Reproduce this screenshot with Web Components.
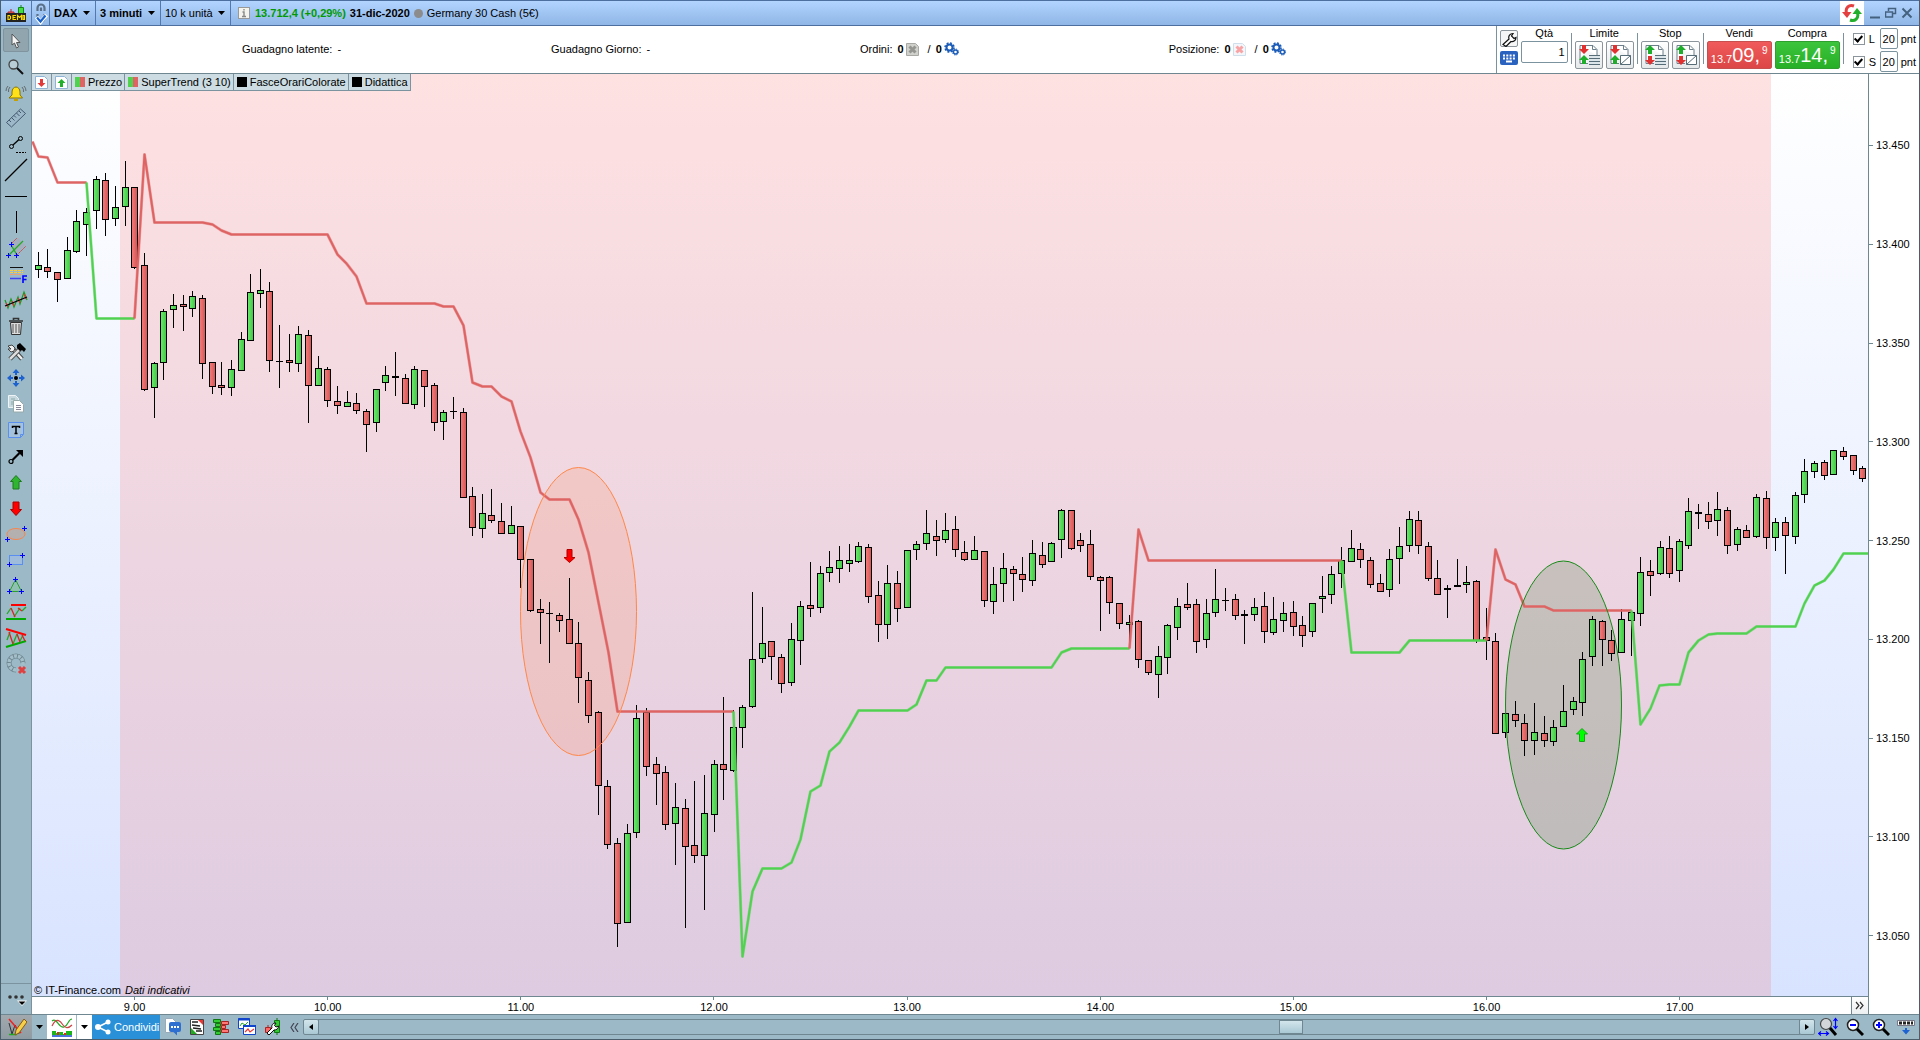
<!DOCTYPE html>
<html lang="it">
<head>
<meta charset="utf-8">
<title>DAX 3 minuti</title>
<style>
  html, body { margin: 0; height: 100%; }
  body { font: 11px/14px "Liberation Sans", Arial, sans-serif; color: #000; overflow: hidden; }
</style>
</head>
<body>
<app-window></app-window>
<script>
const PLUS = (x, y) => `<path d="M${x - 2} ${y + .5}h5M${x + .5} ${y - 2}v5" stroke="#00f"/>`;
const PAGE = 'M.5.5h9l3 3v9h-12z';
const LENS = `<circle cx="9" cy="8" r="5.5" fill="#fff" stroke="#222" stroke-width="1.5"/><path d="M13 12l6 6" stroke="#000" stroke-width="3"/>`;
const UPDN = (up, dn) => `<path d="M${up}l5 5h-3v4h-4v-4h-3z" fill="#1fae2c"/><path d="M${dn}l5-5h-3v-4h-4v4h-3z" fill="#e03030"/>`;

/* name: [width, height, markup] */
const ICONS = {
  demo: [22, 20, `<path d="M3 9h6v4H3zM6 6v3" fill="#e66" stroke="#b22"/><path d="M13.500 4.500h5v6h-5zM16 2v2" fill="#4d4" stroke="#181"/><rect x="1" y="10" width="20" height="9" fill="#222"/><path d="M3 12.500v4h1.500l1-1v-2l-1-1zM11 12.500H8v4h3M8 14.500h2.500M12.500 17v-4.500l2 2 2-2V17M18 12.500h1.500v4H18z" fill="none" stroke="#fd0" stroke-width="1.200"/>`],
  link: [14, 24, `<path d="M3.500 10V7a3.500 3.500 0 0 1 7 0v3M7 10V6.500" fill="none" stroke="#5a7088" stroke-width="2.200"/><path d="M3.500 13v4a3.500 3.500 0 0 0 7 0v-4" fill="none" stroke="#5a7088" stroke-width="2.200"/><path d="M2.500 16l4 5 6-7" fill="none" stroke="#fff" stroke-width="4"/><path d="M3 16.500l3.500 4 5-6" fill="none" stroke="#1b62c8" stroke-width="2.200"/>`],
  caret: [7, 4, `<path d="M0 0h7L3.500 4z" fill="#000"/>`],
  info: [12, 12, `<rect x=".5" y=".5" width="11" height="11" fill="#f4f4ec" stroke="#999"/><path d="M6 2v1.500M4.500 5H6v4M4 9.500h4" stroke="#888" stroke-width="1.400" fill="none"/>`],
  refresh: [20, 20, `<path d="M12 3C7 1 3 5 4.500 10" fill="none" stroke="#e44040" stroke-width="3"/><path d="M0 9h9.500L5 15z" fill="#e44040"/><path d="M8 17c5 2 9-2 7.500-7" fill="none" stroke="#22b02c" stroke-width="3"/><path d="M20 11h-9.500L15 5z" fill="#22b02c"/>`],
  min: [12, 12, `<path d="M1 10.500h10" stroke="#44627f" stroke-width="2"/>`],
  restore: [12, 12, `<path d="M3.500 4V1.500h7v5H8M.5 5h7v5h-7z" fill="none" stroke="#44627f" stroke-width="1.500"/>`],
  close: [12, 12, `<path d="M1.500 1.500l9 9M10.500 1.500l-9 9" stroke="#44627f" stroke-width="2"/>`],

  cursor: [24, 24, `<path d="M8 6v11l2.500-2 2 5 2-1-2-4.500H16z" fill="#f4f4f4" stroke="#555"/>`],
  search: [24, 24, `<circle cx="9.500" cy="10.500" r="4.500" fill="#b9cdd6" stroke="#444" stroke-width="1.300"/><path d="M13 14l6 6" stroke="#111" stroke-width="2"/>`],
  bell: [24, 24, `<path d="M5 18h13.500l-2.500-3v-3c0-3-2-5-4-5s-4 2-4 5v3z" fill="#ffe21a" stroke="#8a7400"/><path d="M10 20h4" stroke="#c5a000" stroke-width="2"/><path d="M6 7q-2 2-1.500 5M4 6q-2 2-2 5M18 7q2 2 1.500 5M20 6q2 2 2 5" fill="none" stroke="#555" stroke-width=".8"/>`],
  ruler: [24, 24, `<path d="M2.500 16.500l14-13.500 5 4.500-14 13.500z" fill="#9db8c9" stroke="#43596e"/><path d="M5 14l2 2M7.500 11.500l3 3M10 9.500l2 2M12.500 7l3 3M15 5l2 2" stroke="#43596e"/>`],
  segment: [24, 24, `<circle cx="7.500" cy="14.500" r="2" fill="none" stroke="#000"/><circle cx="16.500" cy="6.500" r="2" fill="none" stroke="#000"/><path d="M9 13l6-5.500" stroke="#000" stroke-width="1.300"/><path d="M12 20.500h10" stroke="#000" stroke-dasharray="2 1"/>`],
  line: [24, 24, `<path d="M1 23L23 1" stroke="#000" stroke-width="1.300"/>`],
  hline: [24, 24, `<path d="M1 12.500h22" stroke="#000"/>`],
  vline: [24, 24, `<path d="M12.500 1v22" stroke="#000"/>`],
  fork: [24, 24, `<path d="M7 9l5 9 9-9-7-7z" fill="#a9a9bb" opacity=".7"/><path d="M6 9l7-7M13 19l9-9" stroke="#d33" stroke-dasharray="2 1"/><path d="M5 19L19 5M7 9l6 10" stroke="#2a2" stroke-width="1.300"/>${PLUS(7, 8)}${PLUS(4, 19)}${PLUS(12, 19)}`],
  fibo: [24, 24, `<path d="M6 5.500h13" stroke="#111"/><path d="M6 8.500h13M6 10.500h13" stroke="#fc3" stroke-dasharray="3 1"/><path d="M6 12.500h12" stroke="#f96" stroke-dasharray="3 1"/><path d="M6 16.500h11" stroke="#44e" stroke-width="1.500"/><path d="M19 21v-7h4M19 17.500h3.500" stroke="#00f" stroke-width="1.600" fill="none"/>`],
  regress: [24, 24, `<path d="M1 12l3 8 3-9 3 8 4-10 2 7 4-12 3 8" fill="none" stroke="#1a9a1a" stroke-width="1.200"/><path d="M2 15l2 4M8 13l2 5M14 10l2 5M20 6l2 5" stroke="#e33" stroke-width="1.200"/><path d="M1 18l22-9" stroke="#000" stroke-width="1.200"/>`],
  trash: [24, 24, `<path d="M6.500 8.500h11l-1 12h-9z" fill="#ddd" stroke="#333"/><path d="M9 10v9M12 10v9M15 10v9" stroke="#555"/><path d="M5 7h14M9.500 6V4.500h5V6" stroke="#333" stroke-width="1.600" fill="none"/>`],
  tools: [24, 24, `<path d="M8 8l10 11" stroke="#444" stroke-width="4.500"/><path d="M8 8l10 11" stroke="#eee" stroke-width="2.500"/><path d="M4 6l4-1 3 3-1 3-3 1-3-3 3 0z" fill="#eee" stroke="#444"/><path d="M6 19L16 9" stroke="#444" stroke-width="4.500"/><path d="M6 19L16 9" stroke="#ddd" stroke-width="2.500"/><path d="M13 5l3-2 6 6-2 3-2-2-2 1-3-3z" fill="#000"/>`],
  move: [24, 24, `<g fill="#1d62d0"><path d="M12 3l3.500 4H8.500zM12 21l3.500-4H8.500zM3 12l4-3.500v7zM21 12l-4-3.500v7z"/><path d="M11 6h2v3h-2zM11 15h2v3h-2zM6 11h3v2H6zM15 11h3v2h-3z"/></g><circle cx="12" cy="12" r="2" fill="#000"/>`],
  copy: [24, 24, `<path d="M4.500 3.500h7l3 3v9h-10z" fill="#c7d7de" stroke="#eef4f6"/><path d="M7 7h4M7 10h2M7 12h2" stroke="#8aa"/><path d="M9.500 8.500h6l4 4v7.500h-10z" fill="#fff" stroke="#9aa"/><path d="M12 13.500h5M12 15.500h5M12 17.500h5" stroke="#889"/>`],
  text: [24, 24, `<path d="M4.500 4.500h15v12l-3 3h-12z M19 16.500h-2.500v3" fill="#a5c2dd" stroke="#5a8ff0"/><path d="M8.500 10V8.500h7V10M12 8.500v7M10.500 15.500h3" fill="none" stroke="#000" stroke-width="1.500"/>`],
  arrow: [24, 24, `<circle cx="7" cy="17.500" r="2" fill="none" stroke="#000" stroke-width="1.200"/><path d="M8.500 16l7-7" stroke="#000" stroke-width="2.200"/><path d="M12 6h7v7z" fill="#000"/>`],
  up: [24, 24, `<path d="M12 5.500l5.500 6h-2.500v7.500H9v-7.500H6.500z" fill="#2fb52f" stroke="#1c7a1c"/>`],
  down: [24, 24, `<path d="M12 19.500l5.500-6h-2.500V6H9v7.500H6.500z" fill="#f00" stroke="#a00"/>`],
  ellipse: [24, 24, `<ellipse cx="12" cy="12" rx="9" ry="5.500" fill="#b5b0b0" stroke="#f7864f"/>${PLUS(20, 6)}${PLUS(3, 17)}`],
  rect: [24, 24, `<rect x="5.500" y="7.500" width="13" height="9" fill="#9fbcdc" stroke="#5a8ff0"/>${PLUS(18, 7)}${PLUS(5, 16)}`],
  triangle: [24, 24, `<path d="M11.500 5.500l6 12h-12z" fill="#8fc0b2" stroke="#2ca02c"/>${PLUS(11, 5)}${PLUS(5, 17)}${PLUS(17, 17)}`],
  range: [24, 24, `<path d="M7 5h15" stroke="#f00" stroke-width="2"/><path d="M2 19h20" stroke="#0a0" stroke-width="2"/><path d="M3 14l4-6M10 17l6-9M18 11l4-4" stroke="#2a2" stroke-width="1.300"/><path d="M7 8l4 9M14 8l4 3" stroke="#d22" stroke-width="1.300"/>`],
  wedge: [24, 24, `<path d="M2 3l20 6" stroke="#f00" stroke-width="2"/><path d="M2 21l20-6" stroke="#0a0" stroke-width="2"/><path d="M3 14l3-8M9 18l4-10M16 15l3-6" stroke="#2a2" stroke-width="1.300"/><path d="M5 6l4 12M13 8l3 8M18 9l3 6" stroke="#d22" stroke-width="1.300"/>`],
  reset: [24, 24, `<circle cx="12" cy="11" r="7" fill="none" stroke="#6f8791" stroke-width="5" stroke-dasharray="33 11" transform="rotate(90 12 11)"/><circle cx="12" cy="11" r="7" fill="none" stroke="#a5bfca" stroke-width="3.500" stroke-dasharray="3 1" pathLength="44" transform="rotate(90 12 11)"/><path d="M14 14h9v8h-9z" fill="#9bb9c6"/><path d="M15 15l6 6M21 15l-6 6" stroke="#e04040" stroke-width="3"/>`],
  more: [24, 24, `<g fill="#333"><circle cx="6" cy="10" r="1.800"/><circle cx="12" cy="10" r="1.800"/><circle cx="18" cy="10" r="1.800"/></g><path d="M13 13.500h10l-5 5.500z" fill="#fff"/><path d="M14.500 14.500h7L18 18z" fill="#000"/>`],

  pageDown: [13, 13, `<path d="${PAGE}" fill="#fff" stroke="#8fb4d6"/><path d="M6.500 11l4-4H8V3H5v4H2.500z" fill="#e23a3a"/>`],
  pageUp: [13, 13, `<path d="${PAGE}" fill="#fff" stroke="#8fb4d6"/><path d="M6.500 3l4 4H8v4H5V7H2.500z" fill="#22b02c"/>`],
  delGrey: [13, 13, `<path d="${PAGE}" fill="#d0d0cc" stroke="#a8a8a4"/><path d="M3.500 3.500l6 6M9.500 3.500l-6 6" stroke="#949490" stroke-width="3"/>`],
  delRed: [13, 13, `<path d="${PAGE}" fill="#f4f6fa" stroke="#cfe0ec"/><path d="M3.500 3.500l6 6M9.500 3.500l-6 6" stroke="#f8a4a4" stroke-width="3"/>`],
  gears: [15, 14, `<circle cx="5.500" cy="5.500" r="4.500" fill="none" stroke="#1b5cb8" stroke-width="1.500" stroke-dasharray="2 1.530"/><circle cx="5.500" cy="5.500" r="3" fill="none" stroke="#1b5cb8" stroke-width="2"/><circle cx="11.500" cy="10" r="3" fill="none" stroke="#1b5cb8" stroke-dasharray="1.400 .960"/><circle cx="11.500" cy="10" r="2" fill="none" stroke="#1b5cb8" stroke-width="1.400"/>`],
  wrench: [16, 16, `<path d="M2 13.500l6-5.500c-1-3 1-5.500 4-5.500L10.500 5l2.500 2.500 2-1c0 3-2.500 4.500-5 4L5 15.500z" fill="#fff" stroke="#111" stroke-width="1.200"/>`],
  keyboard: [18, 14, `<rect width="18" height="14" rx="2" fill="#2a62c0"/><path d="M3 4.500h12M3 7.500h12" stroke="#fff" stroke-width="2" stroke-dasharray="2 1.300"/><path d="M6 10.500h6" stroke="#fff" stroke-width="2"/>`],
  limList: [24, 24, `<path d="M3 2.500h13l4 4v6M3 2.500v18h8" fill="#fff" stroke="#6d7f8a"/><path d="M15.500 2.500v4h4" fill="none" stroke="#6d7f8a"/>${UPDN('7 12', '7 11')}<path d="M12 12h11v10H12z" fill="#dce6ea"/><path d="M12 12.500h11M12 15.500h11M12 18.500h11M12 21.500h11" stroke="#566c76"/>`],
  limBox: [24, 24, `<path d="M3 2.500h13l4 4v6M3 2.500v18h8" fill="#fff" stroke="#6d7f8a"/><path d="M15.500 2.500v4h4" fill="none" stroke="#6d7f8a"/>${UPDN('7 12', '7 11')}<path d="M12.500 12.500h10v9h-10zM12.500 21.500l10-9" fill="#fff" stroke="#566c76"/>`],
  stpList: [24, 24, `<path d="M3 2.500h13l4 4v6M3 2.500v18h8" fill="#fff" stroke="#6d7f8a"/><path d="M15.500 2.500v4h4" fill="none" stroke="#6d7f8a"/>${UPDN('7 2', '7 22')}<path d="M12 12h11v10H12z" fill="#dce6ea"/><path d="M12 12.500h11M12 15.500h11M12 18.500h11M12 21.500h11" stroke="#566c76"/>`],
  stpBox: [24, 24, `<path d="M3 2.500h13l4 4v6M3 2.500v18h8" fill="#fff" stroke="#6d7f8a"/><path d="M15.500 2.500v4h4" fill="none" stroke="#6d7f8a"/>${UPDN('7 2', '7 22')}<path d="M12.500 12.500h10v9h-10zM12.500 21.500l10-9" fill="#fff" stroke="#566c76"/>`],

  pencil: [20, 20, `<path d="M2 6l3 11 3-9 4 9" fill="none" stroke="#333"/><path d="M2 2l12 14" stroke="#e22" stroke-width="1.500"/><path d="M2 17.500h8" stroke="#2a2" stroke-width="1.500"/><path d="M17 2l3 3-8 11-4 2 1-5z" fill="#f5cf4a" stroke="#8a5a10"/>`],
  curves: [22, 20, `<path d="M1 4c5-4 7 8 12 6s4-8 8-8" fill="none" stroke="#2a2" stroke-width="1.200"/><path d="M1 9c5-10 9-4 11-1s5 4 9 0" fill="none" stroke="#c44" stroke-width="1.200"/><path d="M1 14h4v2h3v-1h4v2h3v-3h6v4H1z" fill="#1cb41c"/><path d="M6 15h2v3H6zM13 16h2v2h-2z" fill="#e22"/><path d="M1 19h20" stroke="#14c" stroke-width="1.500"/>`],
  share: [16, 16, `<path d="M13 3L3 8l10 5" fill="none" stroke="#fff" stroke-width="1.600"/><circle cx="13" cy="3" r="2.500" fill="#fff"/><circle cx="3" cy="8" r="3" fill="#fff"/><circle cx="13" cy="13" r="2.500" fill="#fff"/>`],
  chat: [18, 18, `<path d="M1.500.5h7l4 4v10h-11z" fill="#fff" stroke="#9ab"/><path d="M7 4h8a2 2 0 0 1 2 2v6a2 2 0 0 1-2 2h-2v3.500L9.500 14H7a2 2 0 0 1-2-2V6a2 2 0 0 1 2-2z" fill="#2f6fd0"/><path d="M7 9h8" stroke="#fff" stroke-width="2" stroke-dasharray="2 1"/>`],
  report: [14, 16, `<path d="M.5.5h13v15H.5z" fill="#fff" stroke="#444"/><path d="M2 3h6M2 6l8 1M3 9l8 1M6 12h6" stroke="#222" stroke-width="1.300"/><path d="M8 1h5v5z" fill="#e33"/><path d="M1 15v-6l6 6z" fill="#2a2"/>`],
  ladder: [18, 18, `<path d="M1.500 1.500h7v3h-7zM3.500 5.500h5v3h-5zM1.500 9.500h7v3h-7zM3.500 13.500h5v3h-5z" fill="#3c3" stroke="#171"/><path d="M9.500 3.500h7v3h-7zM9.500 7.500h4v3h-4zM9.500 11.500h7v3h-7z" fill="#f77" stroke="#a22"/>`],
  windows: [18, 18, `<path d="M.5.5h11v10H.5z" fill="#fff" stroke="#14c"/><path d="M0 1.500h12" stroke="#14c" stroke-width="2"/><path d="M2 8l2-3 3 2 3-3" fill="none" stroke="#2a2"/><path d="M5.500 7.500h12v9h-12z" fill="#fff" stroke="#14c"/><path d="M5 8h13" stroke="#14c" stroke-width="2"/><path d="M7 14l3-3 2 3 4-3" fill="none" stroke="#e33" stroke-width="1.200"/>`],
  wrenchCandle: [18, 18, `<path d="M10.500 2.500h5v12h-5zM13 0v2.500M13 14.500V17" fill="#3c3" stroke="#171"/><path d="M1.500 9.500h5v5h-5zM4 7v2M4 15v2" fill="#f66" stroke="#a22"/><path d="M3 15l5-5c-1-3 1-5 4-5l-1.500 2.500L12 9l2.500-1c0 3-2 4-4.500 4l-5 5z" fill="#fff" stroke="#111"/>`],
  left2: [9, 9, `<path d="M4 0L1 4.500 4 9M8 0L5 4.500 8 9" fill="none" stroke="#445" stroke-width="1.200"/>`],
  right2: [9, 9, `<path d="M1 1l3 3.500L1 8M5 1l3 3.500L5 8" fill="none" stroke="#333" stroke-width="1.200"/>`],
  triL: [4, 6, `<path d="M4 0v6L0 3z" fill="#000"/>`],
  triR: [4, 6, `<path d="M0 0v6l4-3z" fill="#000"/>`],
  zoomFit: [20, 20, `<circle cx="8" cy="7" r="5.500" fill="#d2d6d8" stroke="#444" stroke-width="1.200"/><path d="M12 11l6 7" stroke="#000" stroke-width="3"/><path d="M17.500 2v9M15.500 4l2-2.500 2 2.500M15.500 9l2 2.500 2-2.500M1 16.500h9M3 14.500L.5 16.500 3 18.500M8 14.500l2.500 2-2.500 2" fill="none" stroke="#00f" stroke-width="1.200"/>`],
  zoomOut: [20, 20, `${LENS}<path d="M6 8h6" stroke="#00f" stroke-width="2"/>`],
  zoomIn: [20, 20, `${LENS}<path d="M6 8h6M9 5v6" stroke="#00f" stroke-width="2"/>`],
  dock: [20, 20, `<path d="M1.500 3.500h17v5h-17z" fill="#fff" stroke="#778"/><path d="M3 6h14" stroke="#222" stroke-width="3" stroke-dasharray="3 1"/><path d="M9 11h2v2h3l-4 4.500L6 13h3z" fill="#1d62d0"/>`]
};

function define(name, html, after) {
  const tpl = document.createElement('template');
  tpl.innerHTML = html;
  customElements.define(name, class extends HTMLElement {
    constructor() {
      super();
      this.attachShadow({ mode: 'open' }).append(tpl.content.cloneNode(true));
    }
    connectedCallback() { if (after) after(this, this.shadowRoot); }
  });
}

define('ui-icon', `<style>:host{display:block;flex:none;line-height:0}svg{display:block}</style>`, (el, root) => {
  if (root.querySelector('svg')) return;
  const [w, h, body] = ICONS[el.getAttribute('name')];
  const t = document.createElement('template');
  t.innerHTML = `<svg width="${w}" height="${h}" viewBox="0 0 ${w} ${h}" aria-hidden="true">${body}</svg>`;
  root.append(t.content);
});

define('drop-field', `<style>
  :host{display:grid;align-items:center;border-right:1px solid #5278ad}
  select,ui-icon{grid-area:1/1}
  select{appearance:none;border:0;background:none;font:inherit;color:inherit;height:24px;padding:0 17px 0 4px;margin:0;outline:0}
  ui-icon{justify-self:end;margin-right:5px;pointer-events:none}
</style><select></select><ui-icon name="caret"></ui-icon>`, (el, root) => {
  const s = root.querySelector('select');
  s.setAttribute('aria-label', el.getAttribute('label'));
  s.innerHTML = `<option>${el.getAttribute('value')}</option>`;
});

define('title-bar', `<style>
  :host{display:flex;align-items:stretch;height:24px;background:linear-gradient(#b2d4ff,#8fb6e6);border-top:1px solid #4d6f9f;border-bottom:1px solid #4d6f9f}
  .cell{display:flex;align-items:center;justify-content:center;border-right:1px solid #5278ad}
  .demo{width:30px}.link{width:17px}
  .bold{font-weight:bold}
  .quote{display:flex;align-items:center;gap:4px;padding-left:7px;flex:1;white-space:nowrap}
  .quote ui-icon{margin-right:1px}
  .chg{color:#009a00;font-weight:bold}
  .dot{width:9px;height:9px;border-radius:50%;background:#8c8c8c}
  button{appearance:none;border:0;background:none;padding:0}
  .refresh{background:#fff;width:24px;display:flex;align-items:center;justify-content:center}
  .win{display:flex;align-items:center;gap:4px;padding:0 6px 0 5px}
</style>
<div class="cell demo"><ui-icon name="demo"></ui-icon></div>
<div class="cell link"><ui-icon name="link"></ui-icon></div>
<drop-field class="bold" label="Strumento" value="DAX"></drop-field>
<drop-field class="bold" label="Periodo" value="3 minuti"></drop-field>
<drop-field label="Unità" value="10 k unità"></drop-field>
<div class="quote"><ui-icon name="info"></ui-icon><span class="chg">13.712,4 (+0,29%)</span><span class="bold">31-dic-2020</span><i class="dot"></i><span>Germany 30 Cash (5€)</span></div>
<button class="refresh" aria-label="Aggiorna"><ui-icon name="refresh"></ui-icon></button>
<div class="win"><button aria-label="Riduci"><ui-icon name="min"></ui-icon></button><button aria-label="Ripristina"><ui-icon name="restore"></ui-icon></button><button aria-label="Chiudi"><ui-icon name="close"></ui-icon></button></div>`);

define('account-strip', `<style>
  :host{display:flex;flex:1;align-items:center;justify-content:space-evenly;white-space:nowrap;padding-bottom:1px}
  div{display:flex;align-items:center}
  b,span+span{margin-left:5px}
  ui-icon{margin-left:2px}
  .sl{margin-left:9px}
</style>
<div><span>Guadagno latente:</span><span>-</span></div>
<div><span>Guadagno Giorno:</span><span>-</span></div>
<div><span>Ordini:</span><b>0</b><ui-icon name="delGrey"></ui-icon><span class="sl">/</span><b>0</b><ui-icon name="gears"></ui-icon></div>
<div><span>Posizione:</span><b>0</b><ui-icon name="delRed"></ui-icon><span class="sl">/</span><b>0</b><ui-icon name="gears"></ui-icon></div>`);

define('deal-button', `<style>
  :host{display:block}
  button{display:flex;align-items:flex-end;justify-content:center;box-sizing:border-box;width:65px;height:28px;padding:0 2px 3px;border:1px solid var(--edge);border-radius:2px;background:linear-gradient(var(--a),var(--b));color:#fff;font:11px/12px "Liberation Sans",Arial,sans-serif}
  .big{font-size:20px;line-height:20px}
  .sup{font-size:10px;align-self:flex-start;margin:3px 0 0 2px}
</style><button><span><slot name="head"></slot></span><span class="big"><slot name="big"></slot></span><span class="sup"><slot name="tail"></slot></span></button>`);

define('order-panel', `<style>
  :host{display:flex;align-items:stretch;gap:3px;border-left:1px solid #7b939e;padding:0 3px;box-sizing:border-box}
  .tools{display:flex;flex-direction:column;gap:4px;padding-top:4px}
  button{appearance:none;padding:0;border:0;background:none;display:block}
  .w{width:18px;height:17px;border:1px solid #8b959b;border-radius:2px;background:#f6f6f6}
  .grp{display:flex;flex-direction:column;align-items:center;gap:1px}
  .grp>.t{line-height:14px}
  .row{display:flex;gap:3px}
  input[type=text]{box-sizing:border-box;border:1px solid #7b939e;border-radius:2px;font:inherit;margin:0;background:#fff;outline:0}
  .qty{width:47px;height:22px;text-align:right;padding:0 2px}
  .order{box-sizing:border-box;width:28px;height:28px;border:1px solid #8b959b;border-radius:2px;background:linear-gradient(#fff,#e6e9ea);display:flex;align-items:center;justify-content:center}
  .sep{width:1px;background:#7b939e;margin:7px 0 9px}
  .opt{display:flex;flex-direction:column;gap:2px;padding:2px 0 0 6px}
  .opt div{display:flex;align-items:center;gap:3px;height:21px}
  .opt label{width:8px;margin-left:1px}
  .opt input[type=text]{width:18px;height:21px;padding:0 1px;text-align:center}
  input[type=checkbox]{appearance:none;margin:0;width:12px;height:12px;border:1px solid #8b959b;background:#fff;display:grid;place-items:center}
  input[type=checkbox]:checked::after{content:"";width:3px;height:6px;border:solid #000;border-width:0 2px 2px 0;transform:rotate(42deg);margin-top:-2px}
  .sell{--a:#f05a5a;--b:#dc4646;--edge:#c65050}
  .buy{--a:#3cc53c;--b:#27b027;--edge:#2fa02f}
</style>
<div class="tools"><button class="w" aria-label="Impostazioni"><ui-icon name="wrench"></ui-icon></button><button aria-label="Tastiera"><ui-icon name="keyboard"></ui-icon></button></div>
<div class="grp"><label class="t" for="q">Qtà</label><input id="q" class="qty" type="text" value="1"></div>
<i class="sep"></i>
<div class="grp"><span class="t">Limite</span><div class="row"><button class="order" aria-label="Limite con lista"><ui-icon name="limList"></ui-icon></button><button class="order" aria-label="Limite"><ui-icon name="limBox"></ui-icon></button></div></div>
<i class="sep"></i>
<div class="grp"><span class="t">Stop</span><div class="row"><button class="order" aria-label="Stop con lista"><ui-icon name="stpList"></ui-icon></button><button class="order" aria-label="Stop"><ui-icon name="stpBox"></ui-icon></button></div></div>
<i class="sep"></i>
<div class="grp"><span class="t">Vendi</span><deal-button class="sell"><span slot="head">13.7</span><span slot="big">09,</span><span slot="tail">9</span></deal-button></div>
<div class="grp"><span class="t">Compra</span><deal-button class="buy"><span slot="head">13.7</span><span slot="big">14,</span><span slot="tail">9</span></deal-button></div>
<i class="sep"></i>
<div class="opt">
  <div><input type="checkbox" id="l" checked><label for="l">L</label><input type="text" value="20" aria-label="Limite pnt"><span>pnt</span></div>
  <div><input type="checkbox" id="s" checked><label for="s">S</label><input type="text" value="20" aria-label="Stop pnt"><span>pnt</span></div>
</div>`);

const TOOLS = ['cursor', 'search', 'bell', 'ruler', 'segment', 'line', 'hline', 'vline', 'fork', 'fibo', 'regress', 'trash', 'tools', 'move', 'copy', 'text', 'arrow', 'up', 'down', 'ellipse', 'rect', 'triangle', 'range', 'wedge', 'reset'];
define('tool-rail', `<style>
  :host{display:flex;flex-direction:column;width:30px;background:#9bb9c6;border-right:1px solid #7b939e}
  nav{flex:1;display:flex;flex-direction:column;gap:2px;padding:2px 0 0 2px}
  button{appearance:none;border:1px solid transparent;border-radius:2px;background:none;padding:0;height:24px;width:26px;box-sizing:border-box;display:flex;align-items:center;overflow:visible;justify-content:center}
  button.on{border-color:#7f949e;background:#91a5af}
  .more{border:0;border-top:1px solid #7b939e;border-radius:0;height:31px;width:30px}
</style>
<nav>${TOOLS.map((n, i) => `<button class="${i ? '' : 'on'}" aria-label="${n}"><ui-icon name="${n}"></ui-icon></button>`).join('')}</nav>
<button class="more" aria-label="Altro"><ui-icon name="more"></ui-icon></button>`);

/* One candle per entry: direction, high, body top, body bottom, low */
const CANDLES = `G252,265,269,277 R249,267,271,277 R272,272,279,301 G237,250,278,278 G210,221,251,252 G208,212,224,255 G176,179,210,228 R173,180,219,235 G186,207,218,225 G161,187,206,225
R187,187,267,268 R253,265,389,390 G362,363,387,417 G309,311,362,379 G294,305,309,327 R295,304,306,330 G291,296,308,316 R295,298,363,378 R362,362,386,393 R362,385,387,394
G360,369,387,395 G332,339,370,370 G274,292,340,340 G269,290,293,307 R282,291,360,371 K325,361,361,387 R334,360,362,371 G326,334,363,371 R330,335,385,422 G356,368,385,385
R367,369,400,406 R386,401,405,413 G391,402,406,406 R393,403,410,413 R409,411,424,451 G389,389,422,431 G366,375,382,390 K352,376,377,395 R374,378,403,403 G366,369,404,408
R370,370,386,406 R383,385,422,430 G410,412,421,439 K397,411,411,418 R408,412,497,497 R487,496,527,535 G494,513,528,537 R489,515,520,522 R503,521,533,533 G506,525,533,533
R526,526,559,587 R559,559,610,611 R599,609,612,643 K602,613,613,662 R613,615,620,631 R578,619,643,643 R622,643,677,702 R672,680,715,722 R711,712,785,814 R780,786,844,848
R838,843,923,946 G824,833,922,922 G705,718,832,837 R708,712,766,775 R757,764,773,804 R766,772,824,829 G783,807,823,864 R799,808,846,927 R781,845,855,862 G775,813,855,909
G760,764,814,831 R697,764,769,799 G710,727,770,771 G705,707,727,747 G592,659,706,707 G607,643,658,662 R641,641,656,679 R654,657,683,692 G623,639,682,685 G601,606,640,664
R562,605,608,616 G566,573,607,612 G551,567,572,581 G546,560,568,582 G544,560,563,571 G542,546,561,562 R544,547,596,602 R581,595,624,641 G565,583,624,638 R571,583,608,621
G550,550,607,607 G541,544,549,559 G510,533,543,549 R520,536,540,555 G513,530,539,542 R516,529,549,556 R541,552,559,560 G536,550,559,559 R551,551,600,606 G567,584,601,613
G553,568,583,601 R566,569,573,600 R557,574,579,591 G540,553,580,585 R542,555,564,567 G542,543,561,561 G509,510,539,557 R510,510,548,549 R533,540,545,551 R530,544,576,579
R576,577,580,630 R576,577,602,613 R603,603,623,628 G615,622,624,646 R620,621,659,667 R660,660,672,674 G646,656,674,697 G624,625,657,673 G598,606,627,639 R583,604,607,609
R599,604,641,652 G599,613,639,647 G569,599,612,616 K588,600,600,610 R594,599,615,619 K610,614,615,643 G598,607,614,620 R592,606,631,642 G597,619,632,634 G602,613,620,631
R601,612,626,635 R616,625,635,646 G603,603,631,636 G576,596,598,612 G566,574,594,603 G547,560,573,587 G530,548,561,561 R543,549,559,567 R557,560,584,587 R574,583,591,591
G549,559,589,596 G527,546,558,583 G511,519,545,551 R511,520,545,553 R542,546,578,580 R560,578,594,594 K585,588,589,617 K559,585,586,586 G566,582,584,592 R580,581,640,642
R608,637,640,659 R633,641,733,733 G713,713,732,737 R701,714,720,726 R714,723,740,755 G703,732,740,754 R716,733,740,746 G720,727,741,745 G685,711,726,726 G697,701,709,714
G652,659,702,715 G616,619,656,665 R620,621,639,665 R630,640,653,660 G609,619,652,652 G611,612,620,655 G557,572,613,625 R560,571,575,595 G541,547,573,574 R536,548,573,577
G539,541,570,581 G498,511,545,548 K504,512,513,528 R502,514,521,528 G492,509,520,535 R507,510,545,553 G527,529,544,550 R525,530,537,537 G494,497,536,537 R491,498,537,548
G518,522,537,550 R517,522,535,573 G492,495,536,543 G459,471,494,502 G461,463,471,477 R460,462,475,479 G450,450,474,474 R447,451,456,459 R455,455,470,474 R466,468,478,481`.split(/\s+/);

const TREND = [
  ['r', '32,141 38,156 47,157 57,182 86,182'],
  ['g', '86,182 96,318 134,318'],
  ['r', '134,318 144,154 154,222 202,222 212,224 221,230 231,234 327,234 337,254 346,263 356,276 366,303 434,303 443,306 453,306 463,325 472,382 482,386 491,386 501,396 511,401 520,431 530,457 540,492 549,499 569,499 578,519 588,552 598,602 608,652 617,711 733,711'],
  ['g', '733,711 742,956 752,891 762,868 781,868 791,862 800,839 810,791 820,785 829,751 839,742 849,726 858,710 907,710 916,704 926,680 936,680 945,667 1051,667 1061,652 1071,648 1129,648'],
  ['r', '1129,648 1138,529 1148,560 1341,560'],
  ['g', '1341,560 1351,652 1399,652 1409,640 1486,640'],
  ['r', '1486,640 1495,549 1505,579 1515,584 1524,606 1544,606 1553,610 1631,610'],
  ['g', '1631,610 1640,724 1650,708 1659,685 1669,684 1679,684 1688,652 1698,640 1708,634 1717,633 1746,633 1756,626 1795,626 1804,603 1814,585 1824,580 1833,569 1843,553 1868,553']
];

function candleMarkup() {
  return CANDLES.map((c, i) => {
    const x = Math.floor(38.3 + 9.653 * i);
    const [h, t, b, l] = c.slice(1).split(',').map(Number);
    const wick = `<path d="M${x + .5} ${h}V${l + 1}" stroke="#000"/>`;
    if (c[0] === 'K') return wick + `<rect x="${x - 3}" y="${t}" width="7" height="${b - t + 1}"/>`;
    return wick + `<rect x="${x - 2.5}" y="${t + .5}" width="6" height="${b - t}" fill="url(#${c[0]})" stroke="#000"/>`;
  }).join('');
}

define('price-chart', `<style>
  :host{display:block;min-width:0;min-height:0}
  svg{display:block;width:100%;height:100%}
  polyline{fill:none;stroke-linejoin:round}
  .r{stroke:#de6464}.g{stroke:#50d250}
  .halo{stroke-width:3;opacity:.5}.core{stroke-width:2}
</style>
<svg viewBox="32 74 1836 922" preserveAspectRatio="none" role="img" aria-label="Grafico DAX">
  <defs>
    <linearGradient id="bg" x2="0" y2="1"><stop stop-color="#fff"/><stop offset="1" stop-color="#d8e3ff"/></linearGradient>
    <linearGradient id="ses" x2="0" y2="1"><stop stop-color="#fee1e1"/><stop offset="1" stop-color="#decbe1"/></linearGradient>
    <linearGradient id="G"><stop stop-color="#6cec6c"/><stop offset="1" stop-color="#44c444"/></linearGradient>
    <linearGradient id="R"><stop stop-color="#f77c7c"/><stop offset="1" stop-color="#d05656"/></linearGradient>
  </defs>
  <rect x="32" y="74" width="1836" height="922" fill="url(#bg)"/>
  <rect x="120" y="74" width="1651" height="922" fill="url(#ses)"/>
  <ellipse cx="578.5" cy="611.5" rx="58" ry="144" fill="#f89e7e" fill-opacity=".27"/>
  <ellipse cx="1563.5" cy="705" rx="58" ry="144" fill="#6f9268" fill-opacity=".3"/>
  ${candleMarkup()}
  <g transform="translate(.5 .5)">${TREND.map(([c, p]) => `<polyline class="${c} halo" points="${p}"/><polyline class="${c} core" points="${p}"/>`).join('')}</g>
  <ellipse cx="578.5" cy="611.5" rx="58" ry="144" fill="none" stroke="#ff8748"/>
  <ellipse cx="1563.5" cy="705" rx="58" ry="144" fill="none" stroke="#168a16"/>
  <path d="M569.500 562.500l-5.500-5h3v-8h5v8h3z" fill="#f00" stroke="#b00000"/>
  <path d="M1582 728.500l5.500 5.500h-3v7.500h-5V734h-3z" fill="#0f0" stroke="#12a812"/>
</svg>`);

define('indicator-tabs', `<style>
  :host{display:flex;align-self:start;justify-self:start;height:16px;border-bottom:1px solid #7b939e;background:#ccdce2;white-space:nowrap}
  button{appearance:none;border:0;border-right:1px solid #7b939e;background:none;font:inherit;color:#000;padding:0 2px 0 3px;display:flex;align-items:center;gap:3px}
  .fold{padding:0 3px}
  i{width:10px;height:10px;background:#000}
  i.two{background:linear-gradient(90deg,#50d250 50%,#de6464 50%)}
</style>
<button class="fold" aria-label="Comprimi"><ui-icon name="pageDown"></ui-icon></button><button class="fold" aria-label="Espandi"><ui-icon name="pageUp"></ui-icon></button><button><i class="two"></i>Prezzo</button><button><i class="two"></i>SuperTrend (3 10)</button><button><i></i>FasceOrariColorate</button><button><i></i>Didattica</button>`);

define('price-axis', `<style>
  :host{display:flex;flex-direction:column;border-left:1px solid #6f8791;background:#fff}
  div{flex:988 0 0;min-height:0;display:flex;align-items:center;gap:3px}
  div::before{content:"";width:4px;height:1px;background:#6f8791}
  i{flex:221 0 0}i:last-child{flex-grow:109}
</style><i></i>${[450, 400, 350, 300, 250, 200, 150, 100].map(v => `<div>13.${v}</div>`).join('')}<div>13.050</div><i></i>`);

define('time-axis', `<style>
  :host{display:flex;height:17px;border-top:1px solid #6f8791;background:#fff}
  div{flex:1931 0 0;min-width:0;display:flex;flex-direction:column;align-items:center;line-height:14px}
  div::before{content:"";width:1px;height:3px;background:#6f8791}
  .a{flex:60 0 0}
  .z{flex:917 0 0;display:flex;justify-content:flex-end}
  button{appearance:none;box-sizing:border-box;width:17px;border:0;border-left:1px solid #6f8791;background:linear-gradient(#fff,#eceff0);padding:0;display:grid;place-items:center}
</style><i class="a"></i>${[9, 10, 11, 12, 13, 14, 15, 16, 17].map(h => `<div>${h}.00</div>`).join('')}<span class="z"><button aria-label="Ultima candela"><ui-icon name="right2"></ui-icon></button></span>`);

define('status-bar', `<style>
  :host{display:flex;height:24px;background:#9bb9c6;border-top:1px solid #6f8791;align-items:stretch}
  button{appearance:none;border:0;background:none;padding:0;font:inherit;color:inherit;display:flex;align-items:center;justify-content:center}
  .p{width:31px;background:linear-gradient(#a2a9ae,#8e9aa1)}
  .d{width:15px}
  .w{background:#fff}.c{width:30px;border-right:1px solid #9bb9c6}
  .share{background:#2a91d8;color:#fff;gap:3px;padding:0 1px 0 3px;height:24px}
  .icons{display:flex;align-items:center;gap:8px;padding:0 4px}
  .scroll{flex:1;display:flex;align-items:center}
  .scroll button{box-sizing:border-box;width:16px;height:16px;border:1px solid #6f8791;border-radius:2px;background:linear-gradient(#d3e5ec,#a9c8d4)}
  input{appearance:none;flex:1;min-width:0;height:16px;margin:0 -1px;box-sizing:border-box;border:1px solid #6f8791;background:#9bb9c6}
  input::-webkit-slider-thumb{appearance:none;width:24px;height:14px;background:linear-gradient(#d3e5ec,#a9c8d4);border:1px solid #6f8791;box-sizing:border-box}
  .zoom{gap:6px;padding:0 3px}
</style>
<button class="p" aria-label="Disegna"><ui-icon name="pencil"></ui-icon></button><button class="d" aria-label="Opzioni disegno"><ui-icon name="caret"></ui-icon></button><button class="w c" aria-label="Indicatori"><ui-icon name="curves"></ui-icon></button><button class="d w" aria-label="Opzioni indicatori"><ui-icon name="caret"></ui-icon></button><button class="share"><ui-icon name="share"></ui-icon>Condividi</button>
<div class="icons">${['chat', 'report', 'ladder', 'windows', 'wrenchCandle', 'left2'].map(n => `<button aria-label="${n}"><ui-icon name="${n}"></ui-icon></button>`).join('')}</div>
<div class="scroll"><button aria-label="Indietro"><ui-icon name="triL"></ui-icon></button><input type="range" min="0" max="1000" value="659" aria-label="Scorri"><button aria-label="Avanti"><ui-icon name="triR"></ui-icon></button></div>
<div class="icons zoom">${['zoomFit', 'zoomOut', 'zoomIn', 'dock'].map(n => `<button aria-label="${n}"><ui-icon name="${n}"></ui-icon></button>`).join('')}</div>`);

define('app-window', `<style>
  :host{display:flex;flex-direction:column;box-sizing:border-box;height:100vh;border:solid #4a5e6c;border-width:0 1px 1px;background:#fff}
  .main{flex:1;min-height:0;display:flex}
  .work{flex:1;min-width:0;display:flex;flex-direction:column}
  .top{display:flex;height:47px;border-bottom:1px solid #6f8791}
  .plot{flex:1;min-height:0;display:grid;grid-template:minmax(0,1fr) auto / minmax(0,1fr) 51px}
  price-chart,.over{grid-area:1/1}
  .over{display:flex;flex-direction:column;justify-content:space-between;align-items:flex-start;z-index:1}
  .legal{padding:0 0 0 2px;line-height:12px;white-space:nowrap}
  .legal em{margin-left:4px}
  price-axis{grid-area:1/2/3/3;padding-bottom:18px}
  time-axis{grid-area:2/1}
</style>
<title-bar></title-bar>
<div class="main">
  <tool-rail></tool-rail>
  <div class="work">
    <div class="top"><account-strip></account-strip><order-panel></order-panel></div>
    <div class="plot">
      <price-chart></price-chart>
      <div class="over"><indicator-tabs></indicator-tabs><div class="legal">© IT-Finance.com<em>Dati indicativi</em></div></div>
      <price-axis></price-axis>
      <time-axis></time-axis>
    </div>
  </div>
</div>
<status-bar></status-bar>`);
</script>
</body>
</html>
